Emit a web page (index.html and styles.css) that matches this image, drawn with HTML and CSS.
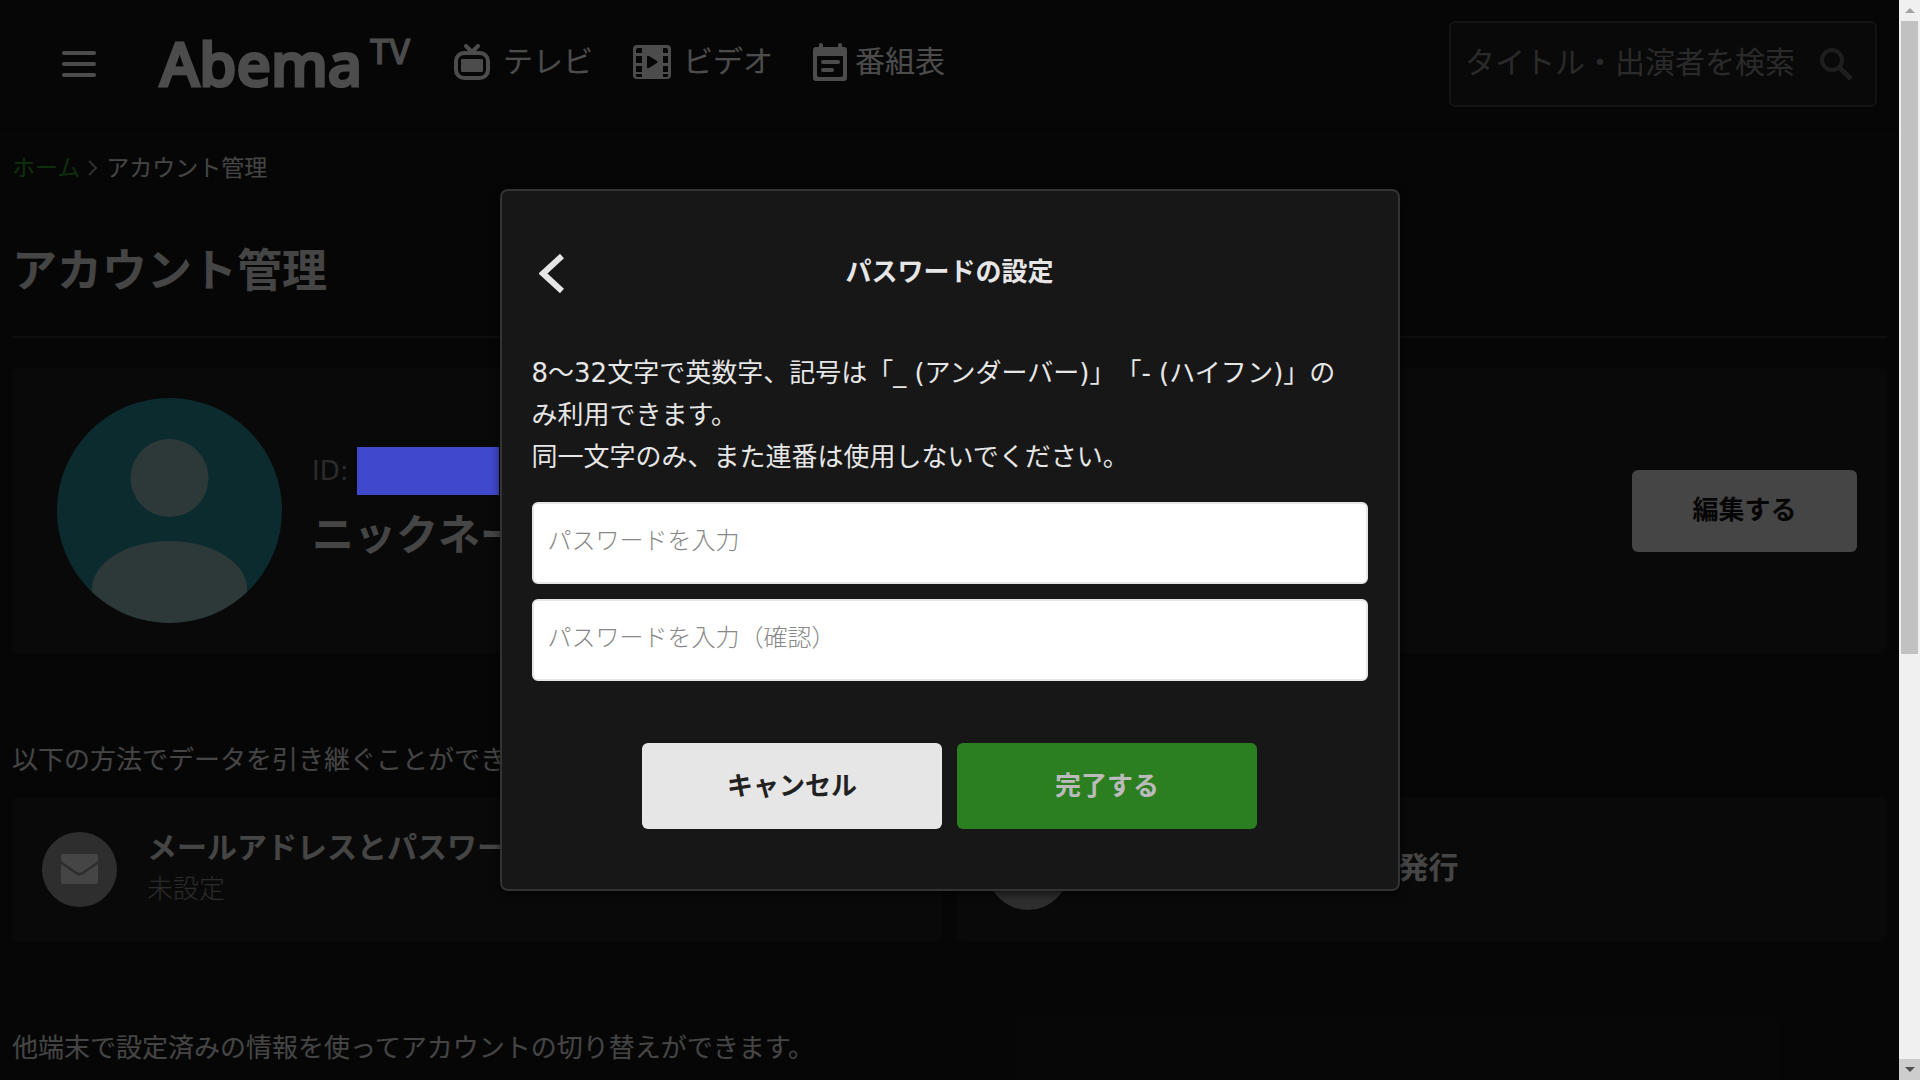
FILE: index.html
```html
<!DOCTYPE html>
<html lang="ja">
<head>
    <meta charset="UTF-8">
    <meta name="viewport" content="width=device-width, initial-scale=1.0">
    <title>アカウント管理 | AbemaTV</title>
    <link rel="stylesheet" href="styles.css">
</head>
<body>
    <div class="page">
        <header class="header">
            <button type="button" class="menu-button" aria-label="メニュー">
                <svg width="34" height="26" viewBox="0 0 34 26" fill="currentColor">
                    <rect width="34" height="4" rx="2"/>
                    <rect y="11" width="34" height="4" rx="2"/>
                    <rect y="22" width="34" height="4" rx="2"/>
                </svg>
            </button>
            <a href="#" class="logo">Abema<span class="logo-tv">TV</span></a>
            <nav class="nav">
                <a href="#" class="nav-item">
                    <svg width="38" height="38" viewBox="0 0 38 38" fill="none" stroke="currentColor">
                        <path d="M13 3l6 6 6-6" stroke-width="4" stroke-linecap="round"/>
                        <rect x="3" y="10" width="32" height="25" rx="8" stroke-width="4"/>
                        <rect x="8" y="16" width="22" height="13" rx="1" fill="currentColor" stroke="none"/>
                    </svg>
                    テレビ
                </a>
                <a href="#" class="nav-item">
                    <svg width="38" height="38" viewBox="0 0 38 38">
                        <path fill="currentColor" fill-rule="evenodd" d="M4 2h30a4 4 0 0 1 4 4v26a4 4 0 0 1-4 4H4a4 4 0 0 1-4-4V6a4 4 0 0 1 4-4zM5 5a2 2 0 0 0-2 2v3h6V5zM3 13v7h6v-7zM3 23v6h6v-6zM3 31a2 2 0 0 0 2 3h4v-3zM30 5v5h5V7a2 2 0 0 0-2-2zM30 13v7h5v-7zM30 23v6h5v-6zM30 31v3h3a2 2 0 0 0 2-3zM14 14v10q0 2 2 1l8-5q1-1 0-2l-8-5q-2-1-2 1z"/>
                    </svg>
                    ビデオ
                </a>
                <a href="#" class="nav-item nav-item-guide">
                    <svg width="34" height="38" viewBox="0 0 34 38">
                        <path fill="currentColor" fill-rule="evenodd" d="M6 4V2a2 2 0 0 1 4 0v2h15V2a2 2 0 0 1 4 0v2h2a3 3 0 0 1 3 3v28a3 3 0 0 1-3 3H3a3 3 0 0 1-3-3V7a3 3 0 0 1 3-3zM4 13v19q0 2 2 2h22q2 0 2-2V13z"/>
                        <path d="M10 19h15M10 27h9" stroke="currentColor" stroke-width="4" stroke-linecap="round"/>
                    </svg>
                    番組表
                </a>
            </nav>
            <form class="search">
                <input type="search" class="search-input" placeholder="タイトル・出演者を検索" aria-label="タイトル・出演者を検索">
                <button type="submit" class="search-button" aria-label="検索">
                    <svg width="34" height="34" viewBox="0 0 34 34" fill="none" stroke="currentColor" stroke-width="4">
                        <circle cx="13" cy="13" r="10"/>
                        <path d="M20 20l12 12" stroke-width="5"/>
                    </svg>
                </button>
            </form>
        </header>

        <main class="main">
            <div class="breadcrumb">
                <a href="#">ホーム</a>
                <svg width="10" height="16" viewBox="0 0 10 16" fill="none" stroke="currentColor" stroke-width="2">
                    <path d="M1 1l7 7-7 7"/>
                </svg>
                <span>アカウント管理</span>
            </div>
            <h1 class="title">アカウント管理</h1>

            <section class="profile card">
                <svg class="avatar" viewBox="0 0 225 225">
                    <clipPath id="avatar-clip"><circle cx="112.500" cy="112.500" r="112.500"/></clipPath>
                    <g clip-path="url(#avatar-clip)">
                        <rect width="225" height="225" fill="#2b8f9f"/>
                        <circle cx="112.500" cy="80" r="39" fill="#97bcbf"/>
                        <path d="M35 225v-34c0-26 34-48 77.500-48s77.500 22 77.500 48v34z" fill="#97bcbf"/>
                    </g>
                </svg>
                <div class="profile-text">
                    <p class="profile-id">ID:<span class="id-mask"></span></p>
                    <p class="nickname">ニックネーム</p>
                </div>
                <button type="button" class="edit-button">編集する</button>
            </section>

            <p class="lead">以下の方法でデータを引き継ぐことができます。</p>
            <div class="methods">
                <a href="#" class="method card">
                    <span class="method-icon">
                        <svg width="37" height="30" viewBox="0 0 37 30" fill="currentColor">
                            <path d="M2 0h33a2 2 0 0 1 2 2v5L21 18q-2.500 1.500-5 0L0 7V2a2 2 0 0 1 2-2z"/>
                            <path d="M0 10l15 10.500q3.500 2 7 0L37 10v18a2 2 0 0 1-2 2H2a2 2 0 0 1-2-2z"/>
                        </svg>
                    </span>
                    <span class="method-text">
                        <strong>メールアドレスとパスワード</strong>
                        <small>未設定</small>
                    </span>
                </a>
                <a href="#" class="method card">
                    <span class="method-icon method-icon-large"></span>
                    <span class="method-text">
                        <strong>ワンタイムパスワード発行</strong>
                    </span>
                </a>
            </div>
            <p class="lead">他端末で設定済みの情報を使ってアカウントの切り替えができます。</p>
        </main>

        <div class="backdrop"></div>
        <div class="dialog-wrap">
            <form class="dialog" role="dialog" aria-labelledby="dialog-title">
                <div class="dialog-head">
                    <button type="button" class="back-button" aria-label="戻る">
                        <svg width="25" height="39" viewBox="0 0 25 39" fill="none" stroke="currentColor" stroke-width="6">
                            <path d="M23 2L4 19.500 23 37"/>
                        </svg>
                    </button>
                    <h2 id="dialog-title">パスワードの設定</h2>
                </div>
                <p class="dialog-text">8～32文字で英数字、記号は「_ (アンダーバー)」「- (ハイフン)」のみ利用できます。<br>同一文字のみ、また連番は使用しないでください。</p>
                <div class="fields">
                    <input type="password" placeholder="パスワードを入力" aria-label="パスワードを入力">
                    <input type="password" placeholder="パスワードを入力（確認）" aria-label="パスワードを入力（確認）">
                </div>
                <div class="actions">
                    <button type="button" class="button">キャンセル</button>
                    <button type="submit" class="button button-primary" disabled>完了する</button>
                </div>
            </form>
        </div>
    </div>

    <div class="scrollbar" aria-hidden="true">
        <span class="scroll-arrow"><svg width="10" height="5" viewBox="0 0 10 5"><path d="M0 5l5-5 5 5z" fill="#a3a3a3"/></svg></span>
        <span class="scroll-track"><span class="scroll-thumb"></span></span>
        <span class="scroll-arrow scroll-arrow-down"><svg width="10" height="5" viewBox="0 0 10 5"><path d="M0 0l5 5 5-5z" fill="#505050"/></svg></span>
    </div>
</body>
</html>
```
FILE: styles.css
```css
* {
    box-sizing: border-box;
}
body {
    margin: 0;
    height: 100vh;
    display: flex;
    overflow: hidden;
    background-color: #171717;
    color: #e6e6e6;
    font-family: "DejaVu Sans", "Noto Sans CJK JP", sans-serif;
    font-size: 26px;
    text-spacing-trim: space-all;
}
h1, h2, p {
    margin: 0;
}
a {
    color: inherit;
    text-decoration: none;
}
button, input {
    font: inherit;
    border: none;
}
button {
    padding: 0;
    background: none;
    color: inherit;
    cursor: pointer;
}
svg {
    display: block;
    flex-shrink: 0;
}
.page {
    position: relative;
    flex: 1;
    min-width: 0;
    overflow: hidden;
}

/* header */
.header {
    display: flex;
    align-items: center;
    height: 128px;
    padding: 0 22px 0 62px;
    box-shadow: 0 1px 3px rgba(0, 0, 0, 0.5);
    color: #fff;
}
.logo {
    display: flex;
    align-items: flex-start;
    margin-left: 64px;
    padding-bottom: 2px;
    width: 254px;
    font-family: "Noto Sans", sans-serif;
    font-size: 60px;
    font-weight: 500;
    line-height: 70px;
    white-space: nowrap;
    stroke-linejoin: round;
    -webkit-text-stroke: 3px #fff;
}
.logo-tv {
    margin-left: 8px;
    font-size: 34px;
    line-height: 46px;
    -webkit-text-stroke-width: 1px;
}
.nav {
    display: flex;
    gap: 40px;
    margin-left: 39px;
    padding-bottom: 4px;
    font-size: 30px;
    line-height: 40px;
}
.nav-item {
    display: flex;
    align-items: center;
    gap: 12px;
}
.nav-item-guide {
    gap: 8px;
}
.search {
    display: flex;
    align-items: center;
    width: 428px;
    height: 86px;
    margin-left: auto;
    padding: 0 22px 0 14px;
    background-color: #212121;
    border: 2px solid #404040;
    border-radius: 6px;
}
.search-input {
    flex: 1;
    min-width: 0;
    padding: 0 0 4px;
    background: none;
    color: #e6e6e6;
    font-size: 30px;
}
.search-input::placeholder {
    color: #8c8c8c;
    opacity: 1;
}
.search-button {
    color: #666;
}

/* account page */
.main {
    padding: 24px 12px;
}
.breadcrumb {
    display: flex;
    align-items: center;
    gap: 8px;
    font-size: 23px;
    line-height: 32px;
}
.breadcrumb a {
    color: #339c28;
}
.breadcrumb svg {
    color: #999;
}
.title {
    padding: 54px 0 30px;
    border-bottom: 2px solid #333;
    font-size: 45px;
    line-height: 68px;
}
.card {
    background-color: #212121;
    border-radius: 6px;
}
.profile {
    display: flex;
    align-items: center;
    margin-top: 30px;
    padding: 30px 30px 30px 45px;
}
.avatar {
    width: 225px;
    height: 225px;
}
.profile-text {
    flex: 1;
    margin-left: 30px;
}
.profile-id {
    display: flex;
    align-items: center;
    color: #919191;
    line-height: 48px;
}
.id-mask {
    position: relative;
    z-index: 2;
    width: 142px;
    height: 48px;
    margin-left: 9px;
    background-color: #4048cc;
}
.nickname {
    margin-top: 2px;
    font-size: 42px;
    font-weight: bold;
    line-height: 78px;
}
.edit-button {
    width: 225px;
    height: 82px;
    padding-bottom: 6px;
    background-color: #e6e6e6;
    border-radius: 6px;
    color: #171717;
    font-weight: bold;
}
.lead {
    margin-top: 86px;
    line-height: 42px;
}
.methods {
    display: grid;
    grid-template-columns: 1fr 1fr;
    gap: 15px;
    margin-top: 16px;
}
.method {
    display: flex;
    align-items: center;
    gap: 30px;
    height: 144px;
    padding: 0 30px;
}
.method-icon {
    display: flex;
    align-items: center;
    justify-content: center;
    width: 75px;
    height: 75px;
    border-radius: 50%;
    background-color: #999;
}
.method-icon-large {
    width: 82px;
    height: 82px;
}
.method-text {
    display: flex;
    flex-direction: column;
    padding-bottom: 2px;
}
.method-text strong {
    font-size: 30px;
    line-height: 42px;
}
.method-text small {
    color: #919191;
    font-size: 26px;
    font-weight: 300;
    line-height: 40px;
}

/* password dialog */
.backdrop {
    position: absolute;
    inset: 0;
    z-index: 1;
    background-color: rgba(0, 0, 0, 0.7);
}
.dialog-wrap {
    position: absolute;
    inset: 0;
    z-index: 3;
    display: flex;
    align-items: center;
    justify-content: center;
}
.dialog {
    width: 900px;
    padding: 45px 30px 60px;
    background-color: #171717;
    border: 2px solid #333;
    border-radius: 8px;
    box-shadow: 0 3px 8px rgba(0, 0, 0, 0.6);
}
.dialog-head {
    display: grid;
    grid-template-columns: 44px 1fr 44px;
    align-items: center;
    height: 75px;
}
.dialog-head h2 {
    padding-bottom: 8px;
    font-size: 26px;
    text-align: center;
}
.back-button {
    padding-left: 7px;
}
.dialog-text {
    margin-top: 41px;
    padding-right: 12px;
    line-height: 42px;
}
.fields {
    display: flex;
    flex-direction: column;
    gap: 15px;
    margin-top: 24px;
}
.fields input {
    height: 82px;
    padding: 0 14px 4px;
    background-color: #fff;
    border: 2px solid #e6e6e6;
    border-radius: 6px;
    font-size: 24px;
}
.fields input::placeholder {
    color: #888;
    opacity: 1;
    font-weight: 300;
}
.actions {
    display: flex;
    justify-content: center;
    gap: 15px;
    margin-top: 62px;
}
.button {
    width: 300px;
    height: 86px;
    padding-bottom: 6px;
    background-color: #e6e6e6;
    border-radius: 6px;
    color: #212121;
    font-weight: bold;
}
.button-primary {
    background-color: #2b7f20;
    color: #bbb;
}

/* scrollbar */
.scrollbar {
    display: flex;
    flex-direction: column;
    width: 21px;
    background-color: #f0f0f0;
}
.scroll-arrow {
    display: flex;
    align-items: center;
    justify-content: center;
    height: 21px;
}
.scroll-arrow-down {
    background-color: #cdcdcd;
}
.scroll-track {
    flex: 1;
    padding: 0 2px;
}
.scroll-thumb {
    display: block;
    height: 61%;
    background-color: #c1c1c1;
}
```
